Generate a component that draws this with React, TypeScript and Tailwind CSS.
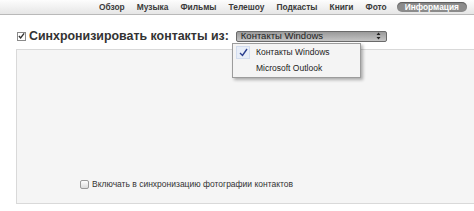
import React from 'react';

const tabs = ['Обзор', 'Музыка', 'Фильмы', 'Телешоу', 'Подкасты', 'Книги', 'Фото'];

export default function App() {
    return (
        <div className="w-[474px] h-[211px] bg-white overflow-hidden relative" style={{ fontFamily: '"Liberation Sans", Arial, sans-serif' }}>
            {/* Top tab bar */}
            <div className="h-[15px] flex items-center justify-end pr-[7px] gap-[12px] bg-gradient-to-b from-[#fdfdfd] to-[#e6e6e6] border-b border-[#b9b9b9]">
                {tabs.map((t) => (
                    <span key={t} className="text-[8.4px] font-bold text-[#3a3a3a] leading-none">{t}</span>
                ))}
                <span className="-ml-[2px] text-[8.4px] font-bold text-white leading-none bg-[#8b8b8b] rounded-full px-[8px] h-[10px] flex items-center shadow-[inset_0_1px_1px_rgba(0,0,0,0.35)]">Информация</span>
            </div>

            {/* Sync header */}
            <div className="flex items-center pl-[17px] mt-[15px] h-[12px]">
                <span className="w-[9px] h-[9px] bg-white border border-[#8a8a8a] flex items-center justify-center">
                    <svg width="8" height="8" viewBox="0 0 8 8"><path d="M1 4 L3 6.2 L7 1" stroke="#333" strokeWidth="1.6" fill="none" /></svg>
                </span>
                <span className="ml-[3px] text-[12.4px] font-bold text-[#333] leading-none">Синхронизировать контакты из:</span>
                <div className="ml-[7px] w-[151px] h-[11px] rounded-[2px] border border-[#6a6a6a] bg-gradient-to-b from-[#9a9a9a] to-[#c4c4c4] flex items-center justify-between pl-[4px] pr-[5px]">
                    <span className="text-[9.5px] text-[#222] leading-none">Контакты Windows</span>
                    <svg width="5" height="8" viewBox="0 0 5 8"><path d="M2.5 0.5 L4.5 3 L0.5 3 Z M2.5 7.5 L4.5 5 L0.5 5 Z" fill="#222" /></svg>
                </div>
            </div>

            {/* Panel */}
            <div className="ml-[16px] mt-[7px] h-[155px] bg-[#f5f5f5] border-t border-b border-l border-[#d9d9d9] flex flex-col justify-end pb-[14px]">
                <div className="flex items-center pl-[63px]">
                    <span className="w-[9px] h-[9px] rounded-[2px] border border-[#9a9a9a] bg-gradient-to-b from-white to-[#dcdcdc]" />
                    <span className="ml-[3px] text-[8.5px] text-[#333] leading-none">Включать в синхронизацию фотографии контактов</span>
                </div>
            </div>

            {/* Dropdown menu */}
            <div className="absolute left-[232px] top-[43px] w-[129px] h-[35px] bg-[#f4f4f4] border border-[#9c9c9c] shadow-[2px_2px_3px_rgba(0,0,0,0.3)] flex flex-col justify-center gap-[3px] py-[2px]">
                <div className="flex items-center h-[13px]">
                    <span className="ml-[3px] w-[14px] h-[13px] bg-[#e8eef8] border border-[#d3ddef] flex items-center justify-center">
                        <svg width="9" height="9" viewBox="0 0 9 9"><path d="M1 5 L3.5 7.5 L8 1" stroke="#2b3f8f" strokeWidth="1.4" fill="none" /></svg>
                    </span>
                    <span className="ml-[6px] text-[8.5px] text-[#222] leading-none">Контакты Windows</span>
                </div>
                <div className="flex items-center h-[13px]">
                    <span className="ml-[23px] text-[8.5px] text-[#222] leading-none">Microsoft Outlook</span>
                </div>
            </div>
        </div>
    );
}
